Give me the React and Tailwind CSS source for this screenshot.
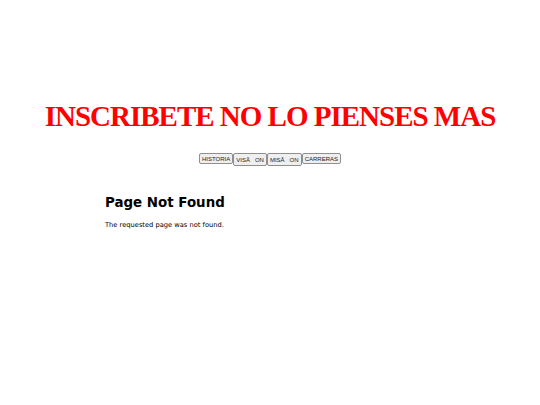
export default function App() {
  const btn =
    "h-[11px] px-[2px] flex items-center bg-[#efefef] border border-[#8f8f8f] rounded-[2px] text-[6px] leading-none text-[#222] font-['Liberation_Sans',Arial,sans-serif]";
  const tall = btn.replace("h-[11px]", "h-[13px] self-start");
  return (
    <div className="w-[540px] h-[405px] bg-white overflow-hidden">
      <h1 className="pt-[100px] text-center text-[29px] leading-[32px] font-bold text-[#ff0000] font-['Liberation_Serif','Times_New_Roman',serif] tracking-[-1px]">
        INSCRIBETE NO LO PIENSES MAS
      </h1>
      <div className="mt-[21px] flex justify-center items-start">
        <button className={btn}>HISTORIA</button>
        <button className={tall}>VISÃ&nbsp;&nbsp;&nbsp;ON</button>
        <button className={tall}>MISÃ&nbsp;&nbsp;&nbsp;ON</button>
        <button className={btn}>CARRERAS</button>
      </div>
      <div className="pl-[105px] pt-[28px] font-['DejaVu_Sans',Verdana,sans-serif] text-black">
        <h2 className="text-[13.4px] leading-[18px] font-bold">Page Not Found</h2>
        <p className="mt-[8px] text-[6.7px] leading-[10px]">The requested page was not found.</p>
      </div>
    </div>
  );
}
